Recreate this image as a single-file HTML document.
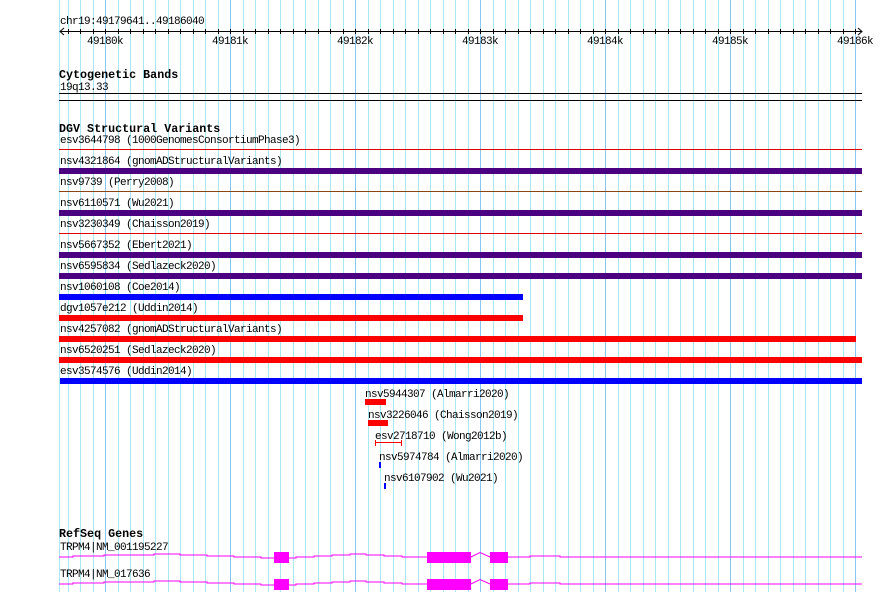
<!DOCTYPE html>
<html><head><meta charset="utf-8"><style>
html,body{margin:0;padding:0;background:#fff;width:890px;height:592px;overflow:hidden}
svg{display:block}
text{font-family:"Liberation Mono","DejaVu Sans Mono",monospace;font-size:11px;letter-spacing:-0.6px;fill:#000}
.b{font-weight:bold;font-size:11.7px;letter-spacing:0}
</style></head><body>
<svg width="890" height="592" xmlns="http://www.w3.org/2000/svg" shape-rendering="crispEdges">
<defs>
<pattern id="gp" x="68" y="0" width="25" height="592" patternUnits="userSpaceOnUse">
<rect x="0" y="0" width="1" height="592" fill="#a8e8f0"/>
<rect x="12" y="0" width="1" height="592" fill="#a8e8f0"/>
</pattern>
<pattern id="tp" x="68" y="0" width="25" height="10" patternUnits="userSpaceOnUse">
<rect x="0" y="0" width="1" height="10" fill="#000"/>
<rect x="12" y="0" width="1" height="10" fill="#000"/>
</pattern>
</defs>
<rect x="59" y="0" width="1" height="592" fill="#a8e8f0"/>
<rect x="68" y="0" width="790" height="592" fill="url(#gp)"/>
<g fill="#88c8f0">
<rect x="105" y="0" width="1" height="592"/>
<rect x="230" y="0" width="1" height="592"/>
<rect x="355" y="0" width="1" height="592"/>
<rect x="480" y="0" width="1" height="592"/>
<rect x="605" y="0" width="1" height="592"/>
<rect x="730" y="0" width="1" height="592"/>
<rect x="855" y="0" width="1" height="592"/>
</g>
<text x="60" y="24">chr19:49179641..49186040</text>
<rect x="60" y="31" width="802" height="1" fill="#000"/>
<rect x="68" y="29" width="790" height="5" fill="url(#tp)"/>
<polyline points="64,28 60,31.5 64,35" fill="none" stroke="#000" shape-rendering="auto"/>
<polyline points="858,28 862,31.5 858,35" fill="none" stroke="#000" shape-rendering="auto"/>
<text x="105" y="44" text-anchor="middle">49180k</text>
<text x="230" y="44" text-anchor="middle">49181k</text>
<text x="355" y="44" text-anchor="middle">49182k</text>
<text x="480" y="44" text-anchor="middle">49183k</text>
<text x="605" y="44" text-anchor="middle">49184k</text>
<text x="730" y="44" text-anchor="middle">49185k</text>
<text x="855" y="44" text-anchor="middle">49186k</text>
<text class="b" x="59" y="78">Cytogenetic Bands</text>
<text x="60" y="90">19q13.33</text>
<rect x="59" y="93" width="803" height="1" fill="#000"/>
<rect x="59" y="100" width="803" height="1" fill="#000"/>
<text class="b" x="59" y="132">DGV Structural Variants</text>
<text x="60" y="143">esv3644798 (1000GenomesConsortiumPhase3)</text>
<rect x="59" y="149" width="803" height="1" fill="#e00000"/>
<text x="60" y="164">nsv4321864 (gnomADStructuralVariants)</text>
<rect x="59" y="168" width="803" height="6" fill="#4b0082"/>
<text x="60" y="185">nsv9739 (Perry2008)</text>
<rect x="59" y="191" width="803" height="1" fill="#8b4513"/>
<text x="60" y="206">nsv6110571 (Wu2021)</text>
<rect x="59" y="210" width="803" height="6" fill="#4b0082"/>
<text x="60" y="227">nsv3230349 (Chaisson2019)</text>
<rect x="59" y="233" width="803" height="1" fill="#e00000"/>
<text x="60" y="248">nsv5667352 (Ebert2021)</text>
<rect x="59" y="252" width="803" height="6" fill="#4b0082"/>
<text x="60" y="269">nsv6595834 (Sedlazeck2020)</text>
<rect x="59" y="273" width="803" height="6" fill="#4b0082"/>
<text x="60" y="290">nsv1060108 (Coe2014)</text>
<rect x="59" y="294" width="464" height="6" fill="#0000ff"/>
<text x="60" y="311">dgv1057e212 (Uddin2014)</text>
<rect x="59" y="315" width="464" height="6" fill="#ff0000"/>
<text x="60" y="332">nsv4257082 (gnomADStructuralVariants)</text>
<rect x="59" y="336" width="797" height="6" fill="#ff0000"/>
<text x="60" y="353">nsv6520251 (Sedlazeck2020)</text>
<rect x="59" y="357" width="803" height="6" fill="#ff0000"/>
<text x="60" y="374">esv3574576 (Uddin2014)</text>
<rect x="60" y="378" width="802" height="6" fill="#0000ff"/>
<text x="365" y="397">nsv5944307 (Almarri2020)</text>
<rect x="365" y="399" width="21" height="6" fill="#ff0000"/>
<text x="368" y="418">nsv3226046 (Chaisson2019)</text>
<rect x="368" y="420" width="20" height="6" fill="#ff0000"/>
<text x="375" y="439">esv2718710 (Wong2012b)</text>
<rect x="375" y="442" width="27" height="1" fill="#ff0000"/>
<rect x="375" y="440" width="1" height="6" fill="#ff0000"/>
<rect x="401" y="440" width="1" height="6" fill="#ff0000"/>
<text x="379" y="460">nsv5974784 (Almarri2020)</text>
<rect x="379" y="462" width="2" height="6" fill="#0000ff"/>
<text x="384" y="481">nsv6107902 (Wu2021)</text>
<rect x="384" y="483" width="2" height="6" fill="#0000ff"/>
<text class="b" x="59" y="537">RefSeq Genes</text>
<text x="60" y="550">TRPM4|NM_001195227</text>
<g fill="#ff00ff">
<polyline fill="none" stroke="#ff00ff" shape-rendering="auto" points="59,557 73,557 73,556 104,556 104,555 154,555 154,554 180,554 180,555 207,555 207,556 234,556 234,557 261,557 261,558 274,558 289,558 296,558 296,557 314,557 314,556 332,556 332,555 350,555 350,554 366,554 366,555 384,555 384,556 402,556 402,557 427,557 471,557 480,552.5 490,557 508,557 530,557 530,556 560,556 560,557 862,557"/>
<rect x="274" y="552" width="15" height="11"/>
<rect x="427" y="552" width="44" height="11"/>
<rect x="490" y="552" width="18" height="11"/>
</g>
<text x="60" y="577">TRPM4|NM_017636</text>
<g transform="translate(0,27)" fill="#ff00ff">
<polyline fill="none" stroke="#ff00ff" shape-rendering="auto" points="59,557 73,557 73,556 104,556 104,555 154,555 154,554 180,554 180,555 207,555 207,556 234,556 234,557 261,557 261,558 274,558 289,558 296,558 296,557 314,557 314,556 332,556 332,555 350,555 350,554 366,554 366,555 384,555 384,556 402,556 402,557 427,557 471,557 480,552.5 490,557 508,557 530,557 530,556 560,556 560,557 862,557"/>
<rect x="274" y="552" width="15" height="11"/>
<rect x="427" y="552" width="44" height="11"/>
<rect x="490" y="552" width="18" height="11"/>
</g>
</svg>
</body></html>
